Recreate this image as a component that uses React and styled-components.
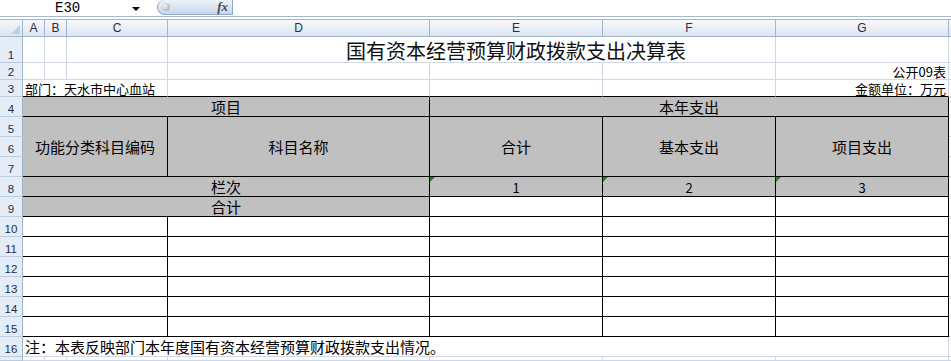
import React from 'react';
import styled, { createGlobalStyle } from 'styled-components';

const GRID = '#d0d7e5';
const HEAD_LINE = '#9eb6ce';
const BLACK = '#000';
const FILL = '#c0c0c0';

const GlobalStyle = createGlobalStyle`
  html, body { margin: 0; padding: 0; background: #fff; }
  body {
    font-family: "Noto Sans CJK SC", "Liberation Sans", sans-serif;
    color: #000;
    overflow: hidden;
  }
`;

const Page = styled.div`
  width: 951px;
  height: 361px;
  display: flex;
  flex-direction: column;
  overflow: hidden;
`;

const FormulaBar = styled.div`
  height: 16px;
  display: flex;
  align-items: stretch;
  border-bottom: 1px solid #a7b9cf;
  margin-bottom: 2px;
  background: #fff;
`;

const NameBox = styled.div`
  width: 140px;
  padding-left: 55px;
  box-sizing: border-box;
  font-family: "Liberation Mono", monospace;
  font-size: 14px;
  line-height: 16px;
  display: flex;
  align-items: center;
  justify-content: space-between;
`;

const DropArrow = styled.span`
  width: 0;
  height: 0;
  margin-top: 1px;
  border-left: 4px solid transparent;
  border-right: 4px solid transparent;
  border-top: 4px solid #000;
`;

const FxPill = styled.div`
  margin-left: 17px;
  width: 76px;
  height: 15px;
  box-sizing: border-box;
  border: 1px solid #8fa8c8;
  border-top: none;
  border-radius: 8px 0 0 8px;
  background: linear-gradient(to bottom, #eef3fa, #c9d7ea);
  display: flex;
  align-items: center;
  justify-content: space-between;
  padding: 0 4px;
`;

const Knob = styled.span`
  width: 8px;
  height: 8px;
  border-radius: 50%;
  background: radial-gradient(circle at 35% 35%, #f4f4f4, #9aa3ad);
`;

const Fx = styled.span`
  font-family: "Liberation Serif", serif;
  font-style: italic;
  font-weight: bold;
  font-size: 13px;
  color: #4a4a4a;
  line-height: 14px;
`;

const FormulaInput = styled.div`
  flex: 1;
  background: #fff;
`;

const Sheet = styled.div`
  flex: 1;
  display: grid;
  grid-template-columns: 23px 22px 22px 101px 262px 173px 173px 173px 1fr;
  grid-template-rows: 18px 26px 17px 17px repeat(13, 20px) 1fr;
  overflow: hidden;
`;

const Corner = styled.div`
  grid-column: 1;
  grid-row: 1;
  border-top: 1px solid ${HEAD_LINE};
  border-right: 1px solid ${HEAD_LINE};
  border-bottom: 1px solid ${HEAD_LINE};
  background: linear-gradient(to bottom, #f4f7fb, #dbe3ee);
  position: relative;
  &::after {
    content: '';
    position: absolute;
    right: 2px;
    bottom: 2px;
    border-left: 9px solid transparent;
    border-bottom: 9px solid #c3cedd;
  }
`;

const ColHead = styled.div`
  grid-column: ${p => p.$c};
  grid-row: 1;
  border-top: 1px solid ${HEAD_LINE};
  border-right: 1px solid ${HEAD_LINE};
  border-bottom: 1px solid ${HEAD_LINE};
  background: linear-gradient(to bottom, #f6f8fb, #dfe6ef);
  font-family: "Liberation Sans", Arial, sans-serif;
  font-size: 12px;
  color: #1f2f44;
  display: flex;
  align-items: center;
  justify-content: center;
`;

const RowHead = styled.div`
  grid-column: 1;
  grid-row: ${p => p.$r};
  border-right: 1px solid ${HEAD_LINE};
  border-bottom: 1px solid #bccbdd;
  background: #e4ecf7;
  font-family: "Liberation Sans", Arial, sans-serif;
  font-size: 11.5px;
  color: #1f2f44;
  display: flex;
  align-items: flex-end;
  justify-content: center;
  padding-bottom: 1px;
  box-sizing: border-box;
  overflow: hidden;
`;

const Cell = styled.div`
  grid-column: ${p => p.$c} / span ${p => p.$cs || 1};
  grid-row: ${p => p.$r} / span ${p => p.$rs || 1};
  border-right: 1px solid ${p => p.$right || GRID};
  border-bottom: 1px solid ${p => p.$bottom || GRID};
  background: ${p => (p.$gray ? FILL : 'transparent')};
  display: flex;
  align-items: ${p => p.$valign || 'center'};
  justify-content: ${p => p.$align || 'center'};
  font-size: ${p => p.$size || 13}px;
  line-height: 1;
  white-space: nowrap;
  min-width: 0;
  padding: 0 2px;
  box-sizing: border-box;
  position: relative;
`;

const Title = styled.span`
  font-size: 20px;
  color: #111;
  padding-top: 3px;
`;

const Num = styled.span`
  padding-bottom: 2px;
`;

const Flag = styled.span`
  position: absolute;
  top: 0;
  left: 0;
  width: 0;
  height: 0;
  border-top: 5px solid #1a8a1a;
  border-right: 5px solid transparent;
`;

const letters = ['A', 'B', 'C', 'D', 'E', 'F', 'G', ''];
const bodyRows = [11, 12, 13, 14, 15, 16]; // grid rows for sheet rows 10-15

function App() {
  return (
    <Page>
      <GlobalStyle />
      <FormulaBar>
        <NameBox>
          <span>E30</span>
          <DropArrow />
        </NameBox>
        <FxPill>
          <Knob />
          <Fx>fx</Fx>
        </FxPill>
        <FormulaInput />
      </FormulaBar>

      <Sheet>
        <Corner />
        {letters.map((l, i) => (
          <ColHead key={i} $c={i + 2}>{l}</ColHead>
        ))}
        {Array.from({ length: 17 }, (_, i) => (
          <RowHead key={i} $r={i + 2}>{i < 16 ? i + 1 : ''}</RowHead>
        ))}

        {/* row 1: title */}
        <Cell $c={2} $r={2} />
        <Cell $c={3} $r={2} />
        <Cell $c={4} $r={2} />
        <Cell $c={5} $r={2} $right="transparent" />
        <Cell $c={6} $r={2} $right="transparent">
          <Title>国有资本经营预算财政拨款支出决算表</Title>
        </Cell>
        <Cell $c={7} $r={2} />
        <Cell $c={8} $r={2} />
        <Cell $c={9} $r={2} />

        {/* row 2 */}
        {[2, 3, 4, 5, 6, 7].map(c => <Cell key={c} $c={c} $r={3} />)}
        <Cell $c={8} $r={3} $align="flex-end">公开09表</Cell>
        <Cell $c={9} $r={3} />

        {/* row 3 */}
        <Cell $c={2} $cs={3} $r={4} $align="flex-start" $bottom={BLACK}>部门：天水市中心血站</Cell>
        <Cell $c={5} $r={4} $bottom={BLACK} />
        <Cell $c={6} $r={4} $bottom={BLACK} />
        <Cell $c={7} $r={4} $bottom={BLACK} />
        <Cell $c={8} $r={4} $bottom={BLACK} $align="flex-end">金额单位：万元</Cell>
        <Cell $c={9} $r={4} />

        {/* row 4 */}
        <Cell $c={2} $cs={4} $r={5} $gray $right={BLACK} $bottom={BLACK} $size={15}>项目</Cell>
        <Cell $c={6} $cs={3} $r={5} $gray $right={BLACK} $bottom={BLACK} $size={15}>本年支出</Cell>
        <Cell $c={9} $r={5} />

        {/* rows 5-7 */}
        <Cell $c={2} $cs={3} $r={6} $rs={3} $gray $right={BLACK} $bottom={BLACK} $size={15}>功能分类科目编码</Cell>
        <Cell $c={5} $r={6} $rs={3} $gray $right={BLACK} $bottom={BLACK} $size={15}>科目名称</Cell>
        <Cell $c={6} $r={6} $rs={3} $gray $right={BLACK} $bottom={BLACK} $size={15}>合计</Cell>
        <Cell $c={7} $r={6} $rs={3} $gray $right={BLACK} $bottom={BLACK} $size={15}>基本支出</Cell>
        <Cell $c={8} $r={6} $rs={3} $gray $right={BLACK} $bottom={BLACK} $size={15}>项目支出</Cell>
        <Cell $c={9} $r={6} />
        <Cell $c={9} $r={7} />
        <Cell $c={9} $r={8} />

        {/* row 8 */}
        <Cell $c={2} $cs={4} $r={9} $gray $right={BLACK} $bottom={BLACK} $size={15}>栏次</Cell>
        {['1', '2', '3'].map((n, i) => (
          <Cell key={n} $c={6 + i} $r={9} $gray $right={BLACK} $bottom={BLACK} $valign="flex-end">
            <Flag />
            <Num>{n}</Num>
          </Cell>
        ))}
        <Cell $c={9} $r={9} />

        {/* row 9 */}
        <Cell $c={2} $cs={4} $r={10} $gray $right={BLACK} $bottom={BLACK} $size={15}>合计</Cell>
        <Cell $c={6} $r={10} $right={BLACK} $bottom={BLACK} />
        <Cell $c={7} $r={10} $right={BLACK} $bottom={BLACK} />
        <Cell $c={8} $r={10} $right={BLACK} $bottom={BLACK} />
        <Cell $c={9} $r={10} />

        {/* rows 10-15 */}
        {bodyRows.map(r => (
          <React.Fragment key={r}>
            <Cell $c={2} $cs={3} $r={r} $right={BLACK} $bottom={BLACK} />
            <Cell $c={5} $r={r} $right={BLACK} $bottom={BLACK} />
            <Cell $c={6} $r={r} $right={BLACK} $bottom={BLACK} />
            <Cell $c={7} $r={r} $right={BLACK} $bottom={BLACK} />
            <Cell $c={8} $r={r} $right={BLACK} $bottom={BLACK} />
            <Cell $c={9} $r={r} />
          </React.Fragment>
        ))}

        {/* row 16: note */}
        <Cell $c={2} $cs={7} $r={17} $align="flex-start" $size={15}>
          注：本表反映部门本年度国有资本经营预算财政拨款支出情况。
        </Cell>
        <Cell $c={9} $r={17} />

        {/* row 17 */}
        {[2, 3, 4, 5, 6, 7, 8, 9].map(c => <Cell key={c} $c={c} $r={18} />)}
      </Sheet>
    </Page>
  );
}

export default App;
